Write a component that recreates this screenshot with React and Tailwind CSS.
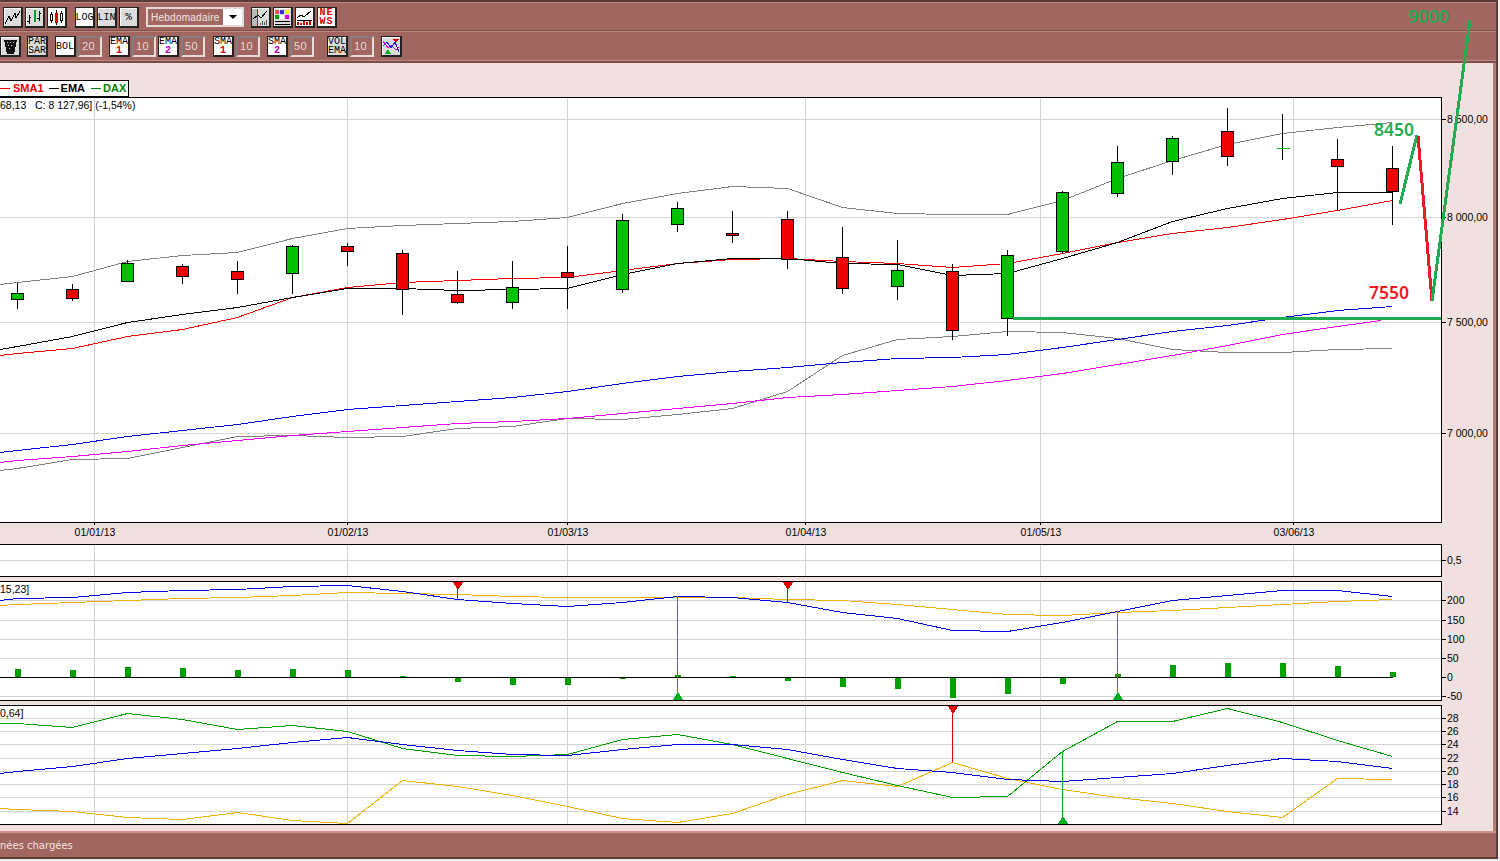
import React from "react";

const wk = (i) => 17.5 + 55 * i;
const GRID = "#d4d4d4";
const VGRID = [94, 347, 567, 805, 1040, 1293];

// y values week by week, first one is at x=0
const toPts = (y0, ys, endX) =>
  [`0,${y0 + 0.5}`]
    .concat(ys.map((y, i) => `${i === ys.length - 1 && endX ? endX : wk(i)},${y + 0.5}`))
    .join(" ");

const CANDLES = [
  ["g", 293, 299, 283, 309],
  ["r", 289, 298, 284, 301],
  ["g", 263, 281, 260, 281],
  ["r", 266, 276, 264, 284],
  ["r", 271, 279, 261, 294],
  ["g", 246, 273, 245, 294],
  ["r", 246, 251, 243, 266],
  ["r", 253, 289, 250, 315],
  ["r", 294, 302, 271, 304],
  ["g", 287, 302, 261, 309],
  ["r", 272, 277, 246, 309],
  ["g", 220, 289, 214, 293],
  ["g", 208, 224, 202, 232],
  ["r", 233, 235, 211, 243],
  ["r", 219, 259, 211, 269],
  ["r", 257, 288, 227, 294],
  ["g", 270, 286, 240, 300],
  ["r", 271, 330, 264, 340],
  ["g", 255, 318, 250, 336],
  ["g", 192, 251, 191, 254],
  ["g", 162, 193, 146, 197],
  ["g", 138, 161, 136, 175],
  ["r", 131, 156, 108, 166],
  ["d", 148, 148, 114, 160],
  ["r", 159, 166, 139, 210],
  ["r", 168, 191, 146, 225],
];

const BOLL_UP = toPts(284, [282, 276, 261, 255, 252, 238, 228, 225, 223, 221, 217, 203, 193, 186, 188, 207, 213, 214, 214, 200, 178, 160, 144, 133, 127, 122]);
const BOLL_LOW = toPts(470, [468, 459, 458, 447, 436, 435, 437, 436, 428, 426, 418, 419, 414, 408, 391, 355, 339, 336, 331, 332, 338, 349, 352, 352, 349, 348]);
const SMA1 = toPts(355, [353, 348, 336, 329, 317, 297, 287, 282, 280, 278, 277, 270, 263, 259, 258, 261, 263, 267, 263, 253, 242, 233, 227, 219, 210, 200]);
const EMA = toPts(349, [346, 336, 322, 314, 307, 297, 288, 288, 290, 289, 288, 274, 263, 258, 258, 263, 264, 275, 273, 258, 242, 221, 208, 198, 192, 192]);
const BLUE = toPts(452, [450, 444, 436, 430, 424, 416, 409, 405, 401, 397, 391, 383, 376, 371, 367, 362, 358, 357, 354, 347, 339, 331, 325, 317, 310, 306]);
const MAGENTA = toPts(462, [460, 456, 451, 445, 440, 435, 431, 427, 423, 421, 418, 413, 408, 403, 397, 394, 390, 386, 380, 373, 364, 355, 345, 334, 326, 320], 1381);

const MACD = toPts(600, [598, 597, 592, 590, 589, 586, 585, 591, 599, 603, 606, 602, 596, 597, 602, 612, 618, 630, 631, 622, 611, 600, 595, 590, 590, 596]);
const SIGNAL = toPts(605, [604, 602, 600, 598, 597, 595, 592, 593, 594, 596, 597, 597, 597, 597, 599, 600, 604, 609, 614, 615, 612, 610, 607, 604, 601, 599]);
const HIST = [669, 670, 667, 668, 670, 669, 670, 676, 682, 685, 685, 679, 675, 676, 681, 687, 689, 698, 694, 684, 674, 665, 663, 663, 666, 672];

const ADX_G = toPts(723, [723, 727, 713, 719, 729, 725, 731, 748, 755, 756, 754, 739, 734, 744, 758, 772, 785, 797, 796, 751, 721, 721, 708, 722, 740, 756]);
const ADX_B = toPts(773, [771, 766, 758, 753, 748, 742, 737, 744, 750, 754, 755, 749, 744, 744, 749, 759, 768, 772, 779, 781, 777, 773, 765, 758, 761, 768]);
const ADX_O = toPts(808, [809, 811, 817, 819, 812, 820, 823, 780, 786, 795, 806, 818, 822, 813, 794, 780, 786, 762, 778, 789, 797, 803, 811, 817, 778, 779]);

const Line = ({ pts, color }) => <polyline points={pts} fill="none" stroke={color} strokeWidth="1" />;

const Axis = ({ ticks }) =>
  ticks.map(([y, label]) => (
    <g key={label}>
      <line x1="1441" x2="1446" y1={y + 0.5} y2={y + 0.5} stroke="#000" />
      <text x="1447" y={y + 4} fill="#000" stroke="none" shapeRendering="auto">
        {label}
      </text>
    </g>
  ));

const Panel = ({ top, height, grid, ticks, children, extra }) => (
  <div className="w-[1442px] border-y border-r border-black bg-white" style={{ height }}>
    <svg
      className="block overflow-visible text-[10.5px]"
      width="1441"
      height={height - 2}
      viewBox={`0 ${top + 1} 1441 ${height - 2}`}
      shapeRendering="crispEdges"
    >
      {VGRID.map((x) => (
        <line key={x} x1={x + 0.5} x2={x + 0.5} y1={top + 1} y2={top + height - 1} stroke={GRID} />
      ))}
      {grid.map((y) => (
        <line key={y} x1="0" x2="1441" y1={y + 0.5} y2={y + 0.5} stroke={GRID} />
      ))}
      {children}
      <Axis ticks={ticks} />
      {extra}
    </svg>
  </div>
);

const Candle = ({ c, i }) => {
  const [kind, top, bottom, hi, lo] = c;
  const x = wk(i);
  return (
    <g>
      <line x1={x} x2={x} y1={hi} y2={lo} stroke="#000" />
      {kind === "d" ? (
        <line x1={x - 6} x2={x + 7} y1={top + 0.5} y2={top + 0.5} stroke="#00c800" />
      ) : (
        <rect
          x={x - 6}
          y={top + 0.5}
          width="12"
          height={bottom - top}
          fill={kind === "g" ? "#00c000" : "#f00000"}
          stroke="#000"
        />
      )}
    </g>
  );
};

const Btn = ({ white, className = "", children }) => (
  <div
    className={`h-[21px] shrink-0 flex flex-col items-center justify-center overflow-hidden border border-[#222] border-r-2 border-b-2 font-['Liberation_Mono',monospace] text-[10px] leading-[9px] text-black ${
      white ? "bg-white" : "bg-[#dcdcdc] shadow-[inset_1px_1px_0_#fff]"
    } ${className}`}
  >
    {children}
  </div>
);

const Field = ({ value, className = "" }) => (
  <div
    className={`h-[21px] w-[24px] shrink-0 flex items-center pl-[2px] border-2 border-t-[#808080] border-l-[#808080] border-r-[#e6dcdc] border-b-[#e6dcdc] text-[11px] tracking-[0.5px] text-[#e8dcda] ${className}`}
  >
    {value}
  </div>
);

const Ind = ({ name, n, color, className = "" }) => (
  <Btn white className={`w-[21px] ${className}`}>
    <span>{name}</span>
    <span className="font-bold" style={{ color }}>
      {n}
    </span>
  </Btn>
);

const Icon = ({ children }) => (
  <svg width="17" height="17" viewBox="0 0 17 17" shapeRendering="crispEdges">
    {children}
  </svg>
);

const Toolbars = () => (
  <>
    <div className="h-[30px] pt-[5px] pl-[3px] flex border-t-2 border-[#5c3a36] shadow-[inset_0_1px_0_#c08a84]">
      <Btn className="w-[20px]">
        <Icon>
          <polyline points="1,15 5,7 7,12 11,4 12,9 16,2" fill="none" stroke="#000" strokeWidth="1" />
        </Icon>
      </Btn>
      <Btn className="w-[20px] ml-[2px]">
        <Icon>
          <path d="M3 6V15M1 12H3M3 8H5M13 2V12M11 9H13M13 4H15" stroke="#000" fill="none" />
          <path d="M8.5 1V13" stroke="#00a030" strokeWidth="2" fill="none" />
        </Icon>
      </Btn>
      <Btn white className="w-[20px] ml-[2px]">
        <Icon>
          <path d="M3.5 3V14M13.5 2V14" stroke="#000" fill="none" />
          <rect x="2.5" y="5.5" width="2" height="6" fill="#fff" stroke="#000" />
          <rect x="12.5" y="4.5" width="2" height="7" fill="#fff" stroke="#000" />
          <path d="M8.5 1V16" stroke="#000" fill="none" />
          <rect x="7" y="4" width="3" height="10" fill="#e00000" />
        </Icon>
      </Btn>
      <Btn white className="w-[20px] ml-[8px]">LOG</Btn>
      <Btn className="w-[20px] ml-[2px]">LIN</Btn>
      <Btn className="w-[20px] ml-[2px] text-[11px]">%</Btn>
      <div className="w-[98px] h-[20px] ml-[7px] flex border-2 border-[#e4dad8]">
        <div className="flex-1 pl-[3px] flex items-center text-[10px] tracking-[0.25px] text-[#f2e6e4]">Hebdomadaire</div>
        <div className="w-[19px] bg-white flex items-center justify-center">
          <div className="w-0 h-0 border-x-[4px] border-x-transparent border-t-[4px] border-t-black"></div>
        </div>
      </div>
      <Btn className="w-[20px] ml-[7px]">
        <Icon>
          <rect x="0" y="0" width="6" height="17" fill="#b8b8b8" />
          <path d="M5.5 0V17" stroke="#e00000" fill="none" />
          <polyline points="1,10 6,6 9,9 15,2" fill="none" stroke="#000" />
          <path d="M8 14V16M10 12V16M12 13V16M14 11V16" stroke="#555" fill="none" />
        </Icon>
      </Btn>
      <Btn className="w-[20px] ml-[2px]">
        <Icon>
          <rect x="1" y="1" width="4" height="4" fill="#f05050" />
          <rect x="6" y="1" width="4" height="4" fill="#3030e0" />
          <rect x="11" y="1" width="4" height="4" fill="#f0f000" />
          <rect x="1" y="6" width="4" height="4" fill="#00a000" />
          <rect x="6" y="6" width="4" height="4" fill="#fff" />
          <rect x="11" y="6" width="4" height="4" fill="#e000e0" />
          <path d="M1 12.5H16M1 15.5H16" stroke="#000" fill="none" />
        </Icon>
      </Btn>
      <Btn white className="w-[20px] ml-[2px]">
        <Icon>
          <polyline points="1,9 5,6 8,8 15,2" fill="none" stroke="#000" />
          <path d="M1 11.5H16" stroke="#000" fill="none" />
          <path d="M2 16V13M5 16V14M8 16V12M11 16V13M14 16V12" stroke="#e00000" strokeWidth="2" fill="none" />
        </Icon>
      </Btn>
      <Btn white className="w-[20px] ml-[2px] font-bold tracking-[1px]">
        <span className="text-[#e00000]">NE</span>
        <span className="text-[#e00000]">WS</span>
      </Btn>
    </div>
    <div className="h-[2px] bg-[#7c4c47] border-b border-[#bb8a84]"></div>
    <div className="h-[28px] pt-[4px] flex items-start">
      <Btn className="w-[21px]">
        <Icon>
          <path d="M2 2H15L12 16H5Z" fill="#111" />
          <path d="M5 4H6M8 4H9M11 4H12M6 7H7M9 7H10M7 10H8" stroke="#ccc" fill="none" />
        </Icon>
      </Btn>
      <Btn className="w-[21px] ml-[6px]">
        <span>PAR</span>
        <span>SAR</span>
      </Btn>
      <Btn white className="w-[21px] ml-[7px]">BOL</Btn>
      <Field value="20" className="ml-[2px]" />
      <Ind name="EMA" n="1" color="#e00000" className="ml-[7px]" />
      <Field value="10" className="ml-[2px]" />
      <Ind name="EMA" n="2" color="#c000c0" className="ml-[2px]" />
      <Field value="50" className="ml-[2px]" />
      <Ind name="SMA" n="1" color="#e00000" className="ml-[8px]" />
      <Field value="10" className="ml-[2px]" />
      <Ind name="SMA" n="2" color="#c000c0" className="ml-[7px]" />
      <Field value="50" className="ml-[2px]" />
      <Btn className="w-[21px] ml-[13px]">
        <span>VOL</span>
        <span>EMA</span>
      </Btn>
      <Field value="10" className="ml-[2px]" />
      <Btn className="w-[21px] ml-[7px]">
        <Icon>
          <polyline points="0,3 5,10 8,7 13,12 16,9" fill="none" stroke="#e000e0" />
          <polyline points="0,8 4,4 8,10 12,4 16,14" fill="none" stroke="#2020e0" />
          <path d="M10 1H16L13 5Z" fill="#e00000" />
          <path d="M2 16H8L5 11Z" fill="#00b020" />
        </Icon>
      </Btn>
    </div>
    <div className="h-[3px] bg-[#7c4c47] border-t border-[#bb8a84]"></div>
  </>
);

const Legend = () => (
  <div className="h-[17px] w-[129px] flex items-center border border-l-0 border-black bg-white text-[11px] font-bold leading-none">
    <span className="w-[10px] h-px bg-[#e00000]"></span>
    <span className="ml-[3px] text-[#f00000]">SMA1</span>
    <span className="w-[10px] h-px bg-black ml-[5px]"></span>
    <span className="ml-[2px] text-black">EMA</span>
    <span className="w-[10px] h-px bg-[#008000] ml-[6px]"></span>
    <span className="ml-[2px] text-[#008000]">DAX</span>
  </div>
);

const DATES = [
  [94.5, "01/01/13"],
  [347.5, "01/02/13"],
  [567.5, "01/03/13"],
  [805.5, "01/04/13"],
  [1040.5, "01/05/13"],
  [1293.5, "03/06/13"],
];

const MainChart = () => (
  <Panel
    top={97}
    height={426}
    grid={[119, 217, 322, 433]}
    ticks={[
      [119, "8 500,00"],
      [217, "8 000,00"],
      [322, "7 500,00"],
      [433, "7 000,00"],
    ]}
    extra={
      <>
        {DATES.map(([x, d]) => (
          <g key={d}>
            <line x1={x} x2={x} y1="522" y2="525" stroke="#000" />
            <text x={x + 0.5} y="536" textAnchor="middle" fill="#000" shapeRendering="auto">
              {d}
            </text>
          </g>
        ))}
      </>
    }
  >
    <text x="0" y="109" fill="#000" shapeRendering="auto" xmlSpace="preserve">
      {"68,13   C: 8 127,96] (-1,54%)"}
    </text>
    <Line pts={BOLL_UP} color="#808080" />
    <Line pts={BOLL_LOW} color="#808080" />
    <Line pts={MAGENTA} color="#f000f0" />
    <Line pts={BLUE} color="#0000e0" />
    <Line pts={SMA1} color="#f00000" />
    <Line pts={EMA} color="#000" />
    {CANDLES.map((c, i) => (
      <Candle key={i} c={c} i={i} />
    ))}
  </Panel>
);

const Marker = ({ x, tip, to, color, up }) => (
  <g>
    <line x1={x} x2={x} y1={tip} y2={to} stroke={color} />
    <path
      d={
        up
          ? `M${x - 5} ${tip} H${x + 6} L${x + 0.5} ${tip - 8} Z`
          : `M${x - 5} ${tip} H${x + 6} L${x + 0.5} ${tip + 8} Z`
      }
      fill={color}
    />
  </g>
);

const MacdChart = () => (
  <Panel
    top={581}
    height={120}
    grid={[600, 620, 639, 658, 696]}
    ticks={[
      [600, "200"],
      [620, "150"],
      [639, "100"],
      [658, "50"],
      [677, "0"],
      [696, "-50"],
    ]}
  >
    <text x="0" y="593" fill="#000" shapeRendering="auto">15,23]</text>
    {HIST.map((y, i) => (
      <rect
        key={i}
        x={wk(i) - 2.5}
        y={Math.min(y, 677)}
        width="6"
        height={Math.abs(y - 677)}
        fill="#00a000"
      />
    ))}
    <line x1="0" x2="1393" y1="677.5" y2="677.5" stroke="#000" />
    <Line pts={SIGNAL} color="#f0b000" />
    <Line pts={MACD} color="#0000e0" />
    <Marker x={457.5} tip={582} to={599} color="#e00000" />
    <Marker x={787.5} tip={582} to={602} color="#e00000" />
    <Marker x={677.5} tip={700} to={596} color="#00b020" up />
    <Marker x={1117.5} tip={700} to={611} color="#00b020" up />
  </Panel>
);

const AdxChart = () => (
  <Panel
    top={705}
    height={120}
    grid={[718, 731, 744, 758, 771, 784, 797, 811]}
    ticks={[
      [718, "28"],
      [731, "26"],
      [744, "24"],
      [758, "22"],
      [771, "20"],
      [784, "18"],
      [797, "16"],
      [811, "14"],
    ]}
  >
    <text x="0" y="717" fill="#000" shapeRendering="auto">0,64]</text>
    <Line pts={ADX_O} color="#f0b000" />
    <Line pts={ADX_G} color="#00a000" />
    <Line pts={ADX_B} color="#0000e0" />
    <Marker x={952.5} tip={706} to={762} color="#e00000" />
    <Marker x={1062.5} tip={824} to={751} color="#00b020" up />
  </Panel>
);

// hand-drawn forecast on top of the whole window
const Annotations = () => (
  <svg className="absolute left-0 top-0 pointer-events-none" width="1500" height="861" viewBox="0 0 1500 861">
    <line x1="1013" x2="1441" y1="318" y2="318" stroke="#22ac50" strokeWidth="3" shapeRendering="crispEdges" />
    <polyline points="1400,204 1417,135" fill="none" stroke="#22ac50" strokeWidth="3" shapeRendering="crispEdges" />
    <polyline points="1418,136 1432,301" fill="none" stroke="#ed1c24" strokeWidth="3" shapeRendering="crispEdges" />
    <polyline points="1432,301 1470,20" fill="none" stroke="#22ac50" strokeWidth="3" shapeRendering="crispEdges" />
    <text x="1408" y="23" fill="#22ac50" className="font-['Noto_Sans',sans-serif] text-[18px] font-medium">9000</text>
    <text x="1374" y="136" fill="#22ac50" className="font-['Noto_Sans',sans-serif] text-[17.5px] font-semibold">8450</text>
    <text x="1369" y="299" fill="#ed1c24" className="font-['Noto_Sans',sans-serif] text-[17.5px] font-semibold">7550</text>
  </svg>
);

export default function App() {
  return (
    <div className="relative w-[1500px] h-[861px] overflow-hidden bg-[#ececec] font-['Liberation_Sans',Arial,sans-serif]">
      <div className="w-[1498px] h-[859px] flex flex-col bg-[#a1665f] border-r-2 border-b-2 border-[#5c3a36]">
        <Toolbars />
        <div className="flex-1 flex">
          <div className="flex-1 flex flex-col pt-[17px] bg-[#f0e0e0] border-r-[3px] border-[#b57d76]">
            <Legend />
            <MainChart />
            <div className="h-[21px]"></div>
            <Panel top={544} height={33} grid={[560]} ticks={[[560, "0,5"]]} />
            <div className="h-[4px]"></div>
            <MacdChart />
            <div className="h-[4px]"></div>
            <AdxChart />
          </div>
        </div>
        <div className="h-[26px] flex items-center border-t-2 border-[#d08f88] font-['DejaVu_Sans',sans-serif] text-[10px] text-[#f2e4e2]">
          nées chargées
        </div>
      </div>
      <Annotations />
    </div>
  );
}
